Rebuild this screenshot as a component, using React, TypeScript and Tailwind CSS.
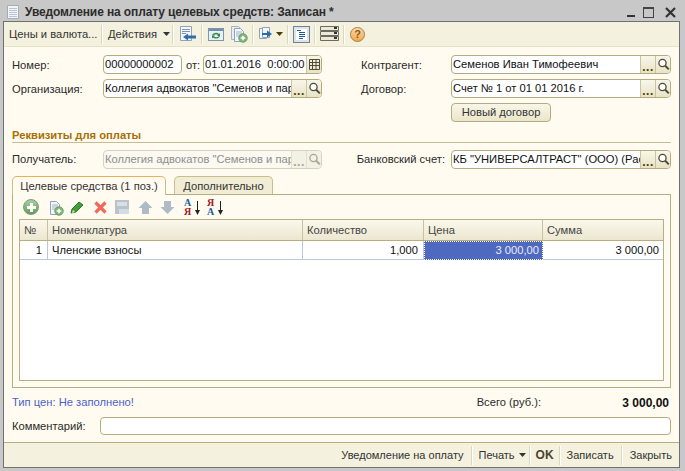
import React from "react";

const font = { fontFamily: '"Liberation Sans", Arial, sans-serif' };

function Sep() {
  return <div className="w-px h-[19px] bg-[#dcd7bd] border-r border-white box-content" />;
}

function Caret({ c = "#333" }: { c?: string }) {
  return (
    <svg width="7" height="4" viewBox="0 0 7 4"><path d="M0 0h7L3.500 4z" fill={c} /></svg>
  );
}

function Lens({ dim }: { dim?: boolean }) {
  const c = dim ? "#a9a698" : "#4d4a3a";
  return (
    <svg width="13" height="13" viewBox="0 0 13 13" fill="none">
      <circle cx="5.500" cy="5" r="3.600" stroke={c} strokeWidth="1.300" fill={dim ? "none" : "#fff"} />
      <path d="M8.200 7.800l3.600 3.600" stroke={c} strokeWidth="2" />
    </svg>
  );
}

function FieldBtn({ children, dim }: { children: React.ReactNode; dim?: boolean }) {
  return (
    <div className={`h-full w-[15px] border-l flex items-center justify-center ${dim ? "border-[#e2dfce] bg-[#f3f1e4]" : "border-[#c9c3a0] bg-gradient-to-b from-[#f8f6e8] to-[#e8e3c6]"}`}>
      {children}
    </div>
  );
}

function Dots({ dim }: { dim?: boolean }) {
  return <span className={`font-bold text-[12px] leading-none tracking-[0.5px] mt-[4px] ${dim ? "text-[#a9a698]" : "text-[#4b3a00]"}`}>...</span>;
}

function Field({ w, text, dim, btns = 2, cal }: { w: string; text?: string; dim?: boolean; btns?: number; cal?: boolean }) {
  return (
    <div className={`${w} h-[19px] rounded-[4px] border flex items-stretch overflow-hidden ${dim ? "border-[#d5d2c2] bg-[#fbf9f0] text-[#8e8e8e]" : "border-[#b5ab7e] bg-white text-[#111]"}`}>
      <div className="flex-1 min-w-0 pl-[1px] leading-[17px] whitespace-pre overflow-hidden">{text}</div>
      {btns === 2 && <FieldBtn dim={dim}><Dots dim={dim} /></FieldBtn>}
      {btns >= 1 && !cal && <FieldBtn dim={dim}><Lens dim={dim} /></FieldBtn>}
      {cal && (
        <FieldBtn>
          <svg width="11" height="11" viewBox="0 0 11 11" fill="none" stroke="#4d4a3a">
            <path d="M.500.500h10v10H.500zM.500 3.500h10M.500 6.500h10M3.500.500v10M7 .500v10" />
          </svg>
        </FieldBtn>
      )}
    </div>
  );
}

function IconDoc({ stacked }: { stacked?: boolean }) {
  return (
    <svg width="17" height="17" viewBox="0 0 17 17">
      {stacked && <path d="M.500.500h7l2 2v11h-9z" fill="#e8edf3" stroke="#a5b5c6" />}
      <path d="M3.500 2.500h6l3 3v10h-9z" fill="#f3f6fa" stroke="#8ea2b8" />
      <path d="M5 6h6M5 8h6M5 10h4" stroke="#9fb3c8" />
      <circle cx="12" cy="12" r="4.200" fill="#7fb678" stroke="#6c9e66" />
      <path d="M12 9.700v4.600M9.700 12h4.600" stroke="#fff" strokeWidth="1.600" />
    </svg>
  );
}

function Sort({ first, second, c1, c2 }: { first: string; second: string; c1: string; c2: string }) {
  return (
    <div className="w-[16px] h-[18px] relative text-[10px] leading-[9px] font-bold" style={{ fontFamily: '"Liberation Serif", serif' }}>
      <span className="block" style={{ color: c1 }}>{first}</span>
      <span className="block" style={{ color: c2 }}>{second}</span>
      <svg width="5" height="14" viewBox="0 0 5 14" className="absolute right-0 top-[3px]">
        <path d="M2.500 0v13" stroke="#222" fill="none" />
        <path d="M0 9l2.500 5L5 9z" fill="#222" />
      </svg>
    </div>
  );
}

export default function App() {
  return (
    <div style={font} className="w-[685px] h-[471px] bg-[#c8c8c8] flex flex-col text-[11.2px] overflow-hidden text-[#2a2a2a]">
      {/* Title */}
      <div className="h-[21px] shrink-0 flex items-center pl-[7px] pr-[9px] pt-[3px]">
        <svg width="12" height="14" viewBox="0 0 12 14" className="mr-[6px]">
          <path d="M.500.500h11v13H.500z" fill="#f2f4f8" stroke="#a3adba" />
          <path d="M2 3.500h8M2 5.500h8M2 7.500h8M2 9.500h8M2 11.500h8" stroke="#b9c4d1" />
        </svg>
        <span className="font-bold text-[#2c2c2c] text-[12px] tracking-[-0.12px]">Уведомление на оплату целевых средств: Записан *</span>
        <div className="ml-auto flex items-center">
          <div className="w-[8px] h-[2px] bg-[#333] mt-[8px]" />
          <div className="ml-[8px] w-[11px] h-[11px] border border-[#444] border-t-2" />
          <svg width="11" height="11" viewBox="0 0 11 11" className="ml-[11px]"><path d="M1 1l9 9M10 1l-9 9" stroke="#333" strokeWidth="2.200" /></svg>
        </div>
      </div>

      {/* Window body */}
      <div className="ml-[3px] mr-[5px] h-[447px] shrink-0 border border-[#707070] flex flex-col bg-[#fffbf0]">
        {/* Toolbar */}
        <div className="h-[25px] shrink-0 bg-[#f4f1de] flex items-center border-b border-[#e6e2c8] text-[#333]">
          <span className="ml-[5px] w-[85px] whitespace-nowrap">Цены и валюта...</span>
          <div className="ml-[7px]"><Sep /></div>
          <span className="ml-[5px] w-[50px]">Действия</span>
          <div className="ml-[5px]"><Caret /></div>
          <div className="ml-[2px]"><Sep /></div>
          <div className="ml-[5px]">
            <svg width="18" height="18" viewBox="0 0 18 18">
              <path d="M1.500 1.500h11v14h-11z" fill="#f4f7fb" stroke="#8ea2b8" />
              <path d="M3 4.500h8M3 6.500h8M3 8.500h4" stroke="#7f95ad" />
              <path d="M4 12l5-3.500V10.500h8v3H9v2z" fill="#2f6fb0" />
            </svg>
          </div>
          <div className="ml-[4px]"><Sep /></div>
          <div className="ml-[5px]">
            <svg width="16" height="15" viewBox="0 0 16 15">
              <rect x=".5" y="1.500" width="15" height="12" fill="#eaf1f6" stroke="#7f95ad" />
              <path d="M1 2h14v2H1z" fill="#6f8fae" />
              <path d="M4 8a4 3 0 0 1 7-1l1-1v3H9l1-1a3 2 0 0 0-5 .6z" fill="#2f8a45" />
              <path d="M12 9a4 3 0 0 1-7 1.500l-1 1V8.500h3l-1 1a3 2 0 0 0 5-.5z" fill="#2f8a45" />
            </svg>
          </div>
          <div className="ml-[7px]"><IconDoc stacked /></div>
          <div className="ml-[4px]"><Sep /></div>
          <div className="ml-[4px]">
            <svg width="16" height="16" viewBox="0 0 16 16">
              <path d="M1.500 2.500h7v10h-7z" fill="#f2f5f9" stroke="#8ea2b8" />
              <path d="M4.500 1.500h7v10h-7z" fill="#f2f5f9" stroke="#8ea2b8" />
              <path d="M4 7h5V4.500l5 3.500-5 3.500V9H4z" fill="#2c6aa8" />
            </svg>
          </div>
          <div className="ml-[2px]"><Caret c="#4a3b00" /></div>
          <div className="ml-[4px]"><Sep /></div>
          <div className="ml-[4px] w-[17px] h-[17px] bg-[#dbe4ec] border border-[#6f8193] flex items-center justify-center">
            <svg width="13" height="13" viewBox="0 0 13 13">
              <path d="M1 1h11v11H1z" fill="#fff" />
              <path d="M2 2.500h4M4 4.500h6M4 6.500h6M4 8.500h6M4 10.500h4" stroke="#1d5c96" />
            </svg>
          </div>
          <div className="ml-[4px]"><Sep /></div>
          <div className="ml-[4px]">
            <svg width="19" height="16" viewBox="0 0 19 16">
              <path d="M.500.500h18v4H.500zM.500 5.500h18v4H.500zM.500 10.500h18v4H.500z" fill="#ece9dc" stroke="#6b6b60" />
              <path d="M14 2h3M14 7h3M14 12h3" stroke="#333" strokeWidth="2" />
            </svg>
          </div>
          <div className="ml-[4px]"><Sep /></div>
          <div className="ml-[5px] w-[15px] h-[15px] rounded-full bg-gradient-to-b from-[#fbd9a4] to-[#f0a951] border border-[#a97e3f] flex items-center justify-center font-bold text-[11px] text-[#8a5a1f]">?</div>
        </div>

        {/* Form */}
        <div className="flex-1 min-h-0 flex flex-col px-[8px] pt-[8px]">
          <div className="flex justify-between">
            <div className="flex flex-col gap-[5px]">
              <div className="flex items-center h-[19px]">
                <span className="w-[91px] pt-[1px]">Номер:</span>
                <Field w="w-[79px]" text="00000000002" btns={0} />
                <span className="ml-[4px] w-[17px] pt-[1px]">от:</span>
                <Field w="w-[119px]" text="01.01.2016  0:00:00" cal btns={1} />
              </div>
              <div className="flex items-center h-[19px]">
                <span className="w-[91px] pt-[1px]">Организация:</span>
                <Field w="w-[219px]" text={'Коллегия адвокатов "Семенов и пар'} />
              </div>
            </div>
            <div className="flex flex-col gap-[5px]">
              <div className="flex items-center h-[19px]">
                <span className="w-[90px] pt-[1px]">Контрагент:</span>
                <Field w="w-[220px]" text="Семенов Иван Тимофеевич" />
              </div>
              <div className="flex items-center h-[19px]">
                <span className="w-[90px] pt-[1px]">Договор:</span>
                <Field w="w-[220px]" text="Счет № 1 от 01 01 2016 г." />
              </div>
              <div className="pl-[90px]">
                <div className="w-[100px] h-[19px] rounded-[4px] border border-[#b5ab7e] bg-gradient-to-b from-[#f8f6e8] to-[#ebe6cb] text-center leading-[17px] text-[#333]">Новый договор</div>
              </div>
            </div>
          </div>

          <div className="mt-[6px] h-[14px] border-b border-[#c7bd92] font-bold text-[#a86f00] leading-[14px] box-content">Реквизиты для оплаты</div>

          <div className="mt-[7px] flex justify-between items-center h-[19px]">
            <div className="flex items-center">
              <span className="w-[91px]">Получатель:</span>
              <Field w="w-[219px]" text={'Коллегия адвокатов "Семенов и пар'} dim />
            </div>
            <div className="flex items-center">
              <span className="whitespace-nowrap mr-[6px]">Банковский счет:</span>
              <Field w="w-[220px]" text={'КБ "УНИВЕРСАЛТРАСТ" (ООО) (Рас'} />
            </div>
          </div>

          {/* Tabs */}
          <div className="mt-[7px] h-[19px] flex items-start relative z-10">
            <div className="h-[19px] w-[154px] rounded-t-[5px] border border-b-0 border-[#c8bd8e] border-t-[#e5b25a] bg-[#fffbf0] text-center leading-[18px] text-[#333]">Целевые средства (1 поз.)</div>
            <div className="ml-[8px] h-[18px] w-[99px] rounded-t-[5px] border border-b-0 border-[#c8bd8e] bg-[#f1ecd4] text-center leading-[18px] text-[#333]">Дополнительно</div>
          </div>
          <div className="h-[194px] -mt-px border border-[#b9ae80] flex flex-col px-[6px]">
            <div className="h-[24px] shrink-0 flex items-center pl-[4px]">
              <div className="w-[16px] h-[16px] rounded-full bg-gradient-to-b from-[#a9cfa1] to-[#5f9d58] border border-[#7a9f74] flex items-center justify-center">
                <div className="relative w-[9px] h-[9px]">
                  <div className="absolute left-[3px] top-0 w-[3px] h-[9px] bg-white" />
                  <div className="absolute left-0 top-[3px] w-[9px] h-[3px] bg-white" />
                </div>
              </div>
              <div className="ml-[8px]"><IconDoc /></div>
              <svg width="15" height="15" viewBox="0 0 15 15" className="ml-[6px]"><path d="M2 9l7-7 4 3-7 7-5 1z" fill="#3f9e3a" stroke="#2c7a28" /><path d="M2 13l1-3 2 2z" fill="#f3e3b0" /></svg>
              <svg width="15" height="15" viewBox="0 0 15 15" className="ml-[8px]"><path d="M2.500 2.500l10 10M12.500 2.500l-10 10" stroke="#ef6a5a" strokeWidth="3.200" /></svg>
              <svg width="16" height="16" viewBox="0 0 16 16" className="ml-[6px]"><path d="M1 1h14v14H1z" fill="#b9c3cc" /><path d="M3 3h10v4H3z" fill="#d8dfe5" /><path d="M5 10h10v5H5z" fill="#d5dce2" /></svg>
              <svg width="15" height="13" viewBox="0 0 15 13" className="ml-[8px]"><path d="M7.500 0l7 7H11v6H4V7H.5z" fill="#aebbc6" /></svg>
              <svg width="15" height="13" viewBox="0 0 15 13" className="ml-[7px]"><path d="M7.500 13l7-7H11V0H4v6H.5z" fill="#aebbc6" /></svg>
              <div className="ml-[9px]"><Sort first="A" second="Я" c1="#1d5c96" c2="#a11b1b" /></div>
              <div className="ml-[7px]"><Sort first="Я" second="A" c1="#a11b1b" c2="#1d5c96" /></div>
            </div>
            <div className="h-[162px] shrink-0 border border-[#b9ae80] bg-white flex flex-col">
              <div className="h-[21px] shrink-0 grid grid-cols-[28px_255px_121px_119px_1fr] bg-gradient-to-b from-[#faf8ec] to-[#ece7cf] border-b border-[#b9ae80] text-[#444] leading-[20px]">
                <div className="pl-[4px] border-r border-[#c8c0a0]">№</div>
                <div className="pl-[4px] border-r border-[#c8c0a0]">Номенклатура</div>
                <div className="pl-[4px] border-r border-[#c8c0a0]">Количество</div>
                <div className="pl-[4px] border-r border-[#c8c0a0]">Цена</div>
                <div className="pl-[4px]">Сумма</div>
              </div>
              <div className="h-[19px] shrink-0 grid grid-cols-[28px_255px_121px_119px_1fr] border-b border-[#b9c9dd] text-[#111] leading-[19px]">
                <div className="pr-[5px] text-right border-r border-[#b9c9dd]">1</div>
                <div className="pl-[4px] border-r border-[#b9c9dd]">Членские взносы</div>
                <div className="pr-[5px] text-right border-r border-[#b9c9dd]">1,000</div>
                <div className="pr-[3px] text-right bg-[#5069c0] text-[#e8ecf8] border border-dotted border-white leading-[17px]">3 000,00</div>
                <div className="pr-[4px] text-right">3 000,00</div>
              </div>
            </div>
          </div>

          <div className="mt-[7px] h-[15px] flex items-center">
            <span className="text-[#4a62c8]">Тип цен: Не заполнено!</span>
            <span className="ml-auto mr-[78px]">Всего (руб.):</span>
            <span className="font-bold text-[#111] text-[12px] w-[50px] whitespace-nowrap mr-[2px] text-right">3 000,00</span>
          </div>
          <div className="mt-[7px] flex items-center h-[18px]">
            <span className="w-[88px]">Комментарий:</span>
            <div className="flex-1 h-[18px] rounded-[4px] border border-[#b5ab7e] bg-white" />
          </div>
        </div>

        {/* Footer */}
        <div className="h-[25px] shrink-0 bg-[#f4f1de] border-t border-[#b9ae80] flex items-center justify-end text-[#333] text-[11px] pr-[7px]">
          <span>Уведомление на оплату</span>
          <div className="ml-[7px]"><Sep /></div>
          <span className="ml-[6px]">Печать</span>
          <div className="ml-[4px]"><Caret /></div>
          <div className="ml-[3px]"><Sep /></div>
          <span className="ml-[5px] font-bold text-[12px] text-[#4a4430]">OK</span>
          <div className="ml-[5px]"><Sep /></div>
          <span className="ml-[6px]">Записать</span>
          <div className="ml-[7px]"><Sep /></div>
          <span className="ml-[7px]">Закрыть</span>
        </div>
      </div>
    </div>
  );
}
